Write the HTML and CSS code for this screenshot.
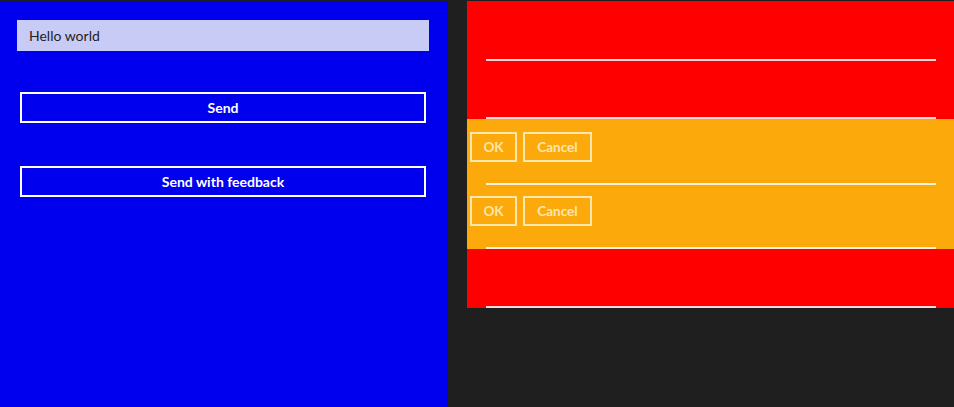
FILE: index.html
```html
<!DOCTYPE html>
<html>
<head>
<meta charset="utf-8">
<link rel="stylesheet" href="styles.css">
</head>
<body>
<div class="app">
  <div class="left">
    <div class="textbox">Hello world</div>
    <button class="wide-btn btn-send">Send</button>
    <button class="wide-btn btn-feedback">Send with feedback</button>
  </div>
  <div class="right">
    <div class="item red h1"><div class="rule"></div></div>
    <div class="item red h2"><div class="rule"></div></div>
    <div class="item orange h3">
      <div class="btns"><button class="small-btn ok">OK</button><button class="small-btn cancel">Cancel</button></div>
      <div class="rule"></div>
    </div>
    <div class="item orange h4">
      <div class="btns"><button class="small-btn ok">OK</button><button class="small-btn cancel">Cancel</button></div>
      <div class="rule"></div>
    </div>
    <div class="item red h5"><div class="rule"></div></div>
  </div>
</div>
</body>
</html>
```
FILE: styles.css
```css
html, body {
  margin: 0;
  padding: 0;
  background: #1f1f1f;
  width: 954px;
  height: 407px;
  overflow: hidden;
  font-family: Lato, "Liberation Sans", sans-serif;
}
.app {
  display: flex;
  gap: 19px;
  padding-top: 1px;
  align-items: flex-start;
}
.left {
  width: 448px;
  height: 406px;
  background: #0000ee;
  display: flex;
  flex-direction: column;
  box-sizing: border-box;
  padding: 19px 19px 0 17px;
}
.textbox {
  width: 412px;
  height: 31px;
  box-sizing: border-box;
  background: #c8cbf5;
  color: #222;
  font-size: 14px;
  line-height: 31px;
  padding-left: 12px;
}
.wide-btn {
  margin-left: 3px;
  width: 406px;
  height: 31px;
  box-sizing: border-box;
  border: 2px solid #ffffff;
  background: transparent;
  color: #ffffff;
  font-family: Lato, "Liberation Sans", sans-serif;
  font-weight: bold;
  font-size: 14px;
  padding: 0;
  line-height: 26px;
}
.btn-send { margin-top: 41px; }
.btn-feedback { margin-top: 43px; }
.right {
  width: 487px;
  display: flex;
  flex-direction: column;
}
.item {
  position: relative;
  display: flex;
  flex-direction: column;
  justify-content: flex-end;
}
.red { background: #ff0000; }
.orange { background: #fca90c; }
.h1 { height: 60px; }
.h2 { height: 58px; }
.h3 { height: 66px; }
.h4 { height: 64px; }
.h5 { height: 59px; }
.rule {
  height: 2px;
  margin: 0 18px 0 19px;
  background: rgba(255, 255, 255, 0.85);
}
.btns {
  display: flex;
  gap: 6px;
  padding-left: 3px;
  margin-bottom: 21px;
}
.small-btn {
  height: 30px;
  box-sizing: border-box;
  border: 2px solid #fde7ad;
  background: transparent;
  color: #fde7ad;
  font-family: Lato, "Liberation Sans", sans-serif;
  font-weight: bold;
  font-size: 13.5px;
  padding: 0;
}
.ok { width: 47px; }
.cancel { width: 69px; }
```
